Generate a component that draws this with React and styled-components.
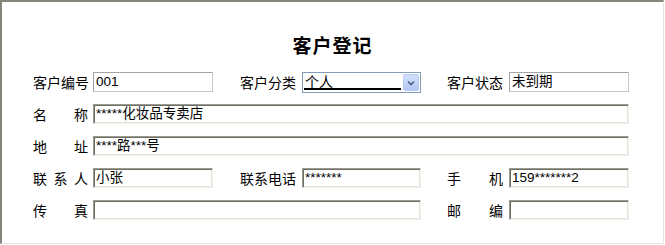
import React from 'react'
import styled, { createGlobalStyle } from 'styled-components'

const Global = createGlobalStyle`
  html, body { margin: 0; padding: 0; background: #fff; }
  body { font-family: "Noto Sans CJK SC", sans-serif; }
`

const Frame = styled.div`
  box-sizing: border-box;
  width: 664px;
  height: 244px;
  border-top: 2px solid #85857a;
  border-left: 2px solid #85857a;
  border-right: 1px solid #e4e4dc;
  border-bottom: 1px solid #e4e4dc;
  background: #fff;
`

const Title = styled.h1`
  margin: 0;
  padding-top: 31px;
  height: 24px;
  line-height: 24px;
  text-align: center;
  font-family: "Noto Sans CJK SC", sans-serif;
  font-size: 19px;
  font-weight: 700;
  letter-spacing: 1px;
  color: #000;
`

const Form = styled.div`
  display: grid;
  margin-top: 15px;
  padding-left: 31px;
  grid-template-columns: 60px 120px 27px 62px 119px 26px 62px 120px;
  grid-auto-rows: 20px;
  row-gap: 12px;
`

const LabelBox = styled.div`
  grid-column: ${p => p.$col};
  width: ${p => p.$w || 55}px;
  display: flex;
  justify-content: space-between;
  align-items: center;
  font-size: 14px;
  color: #000;
  line-height: 20px;
`

const Label = ({ text, col, w }) => (
  <LabelBox $col={col} $w={w}>
    {text.split('').map((c, i) => <span key={i}>{c}</span>)}
  </LabelBox>
)

const Input = styled.div`
  grid-column: ${p => p.$col};
  box-sizing: border-box;
  height: 20px;
  padding-left: 2px;
  font-family: "Liberation Sans", "Noto Sans CJK SC", sans-serif;
  font-size: 13.5px;
  line-height: 17px;
  color: #000;
  white-space: nowrap;
  overflow: hidden;
  background: #fff;
  ${p => p.$flat ? `
    border: 1px solid #a4a4a4;
    border-bottom-color: #c8c8c8;
    border-right-color: #c8c8c8;
  ` : `
    border-top: 1px solid #9a9a90;
    border-left: 1px solid #9a9a90;
    border-bottom: 1px solid #f2f1ea;
    border-right: 1px solid #f2f1ea;
    box-shadow: inset 1px 1px 0 #6e6e64, inset -1px -1px 0 #e3e2da;
  `}
`

const Select = styled.div`
  grid-column: ${p => p.$col};
  box-sizing: border-box;
  height: 21px;
  border: 1px solid #7f9db9;
  display: flex;
  align-items: stretch;
  padding: 1px;
  gap: 2px;
  background: #fff;
`

const SelectValue = styled.div`
  flex: 1;
  box-sizing: border-box;
  font-size: 14px;
  line-height: 15px;
  padding-left: 1px;
  border-bottom: 2px solid #000;
  margin-bottom: 1px;
`

const DropButton = styled.div`
  width: 16px;
  box-sizing: border-box;
  border: 1px solid #b9cbf3;
  border-radius: 2px;
  background: linear-gradient(#d2e0fd, #b4c8f6);
  display: flex;
  align-items: center;
  justify-content: center;
`

const Chevron = () => (
  <svg width="8" height="6" viewBox="0 0 8 6">
    <path d="M1 1.5 L4 4.5 L7 1.5" fill="none" stroke="#4d6185" strokeWidth="1.6" />
  </svg>
)

export default function App() {
  return (
    <>
      <Global />
      <Frame>
        <Title>客户登记</Title>
        <Form>
          <Label text="客户编号" col="1" />
          <Input $col="2" $flat>001</Input>
          <Label text="客户分类" col="4" />
          <Select $col="5">
            <SelectValue>个人</SelectValue>
            <DropButton><Chevron /></DropButton>
          </Select>
          <Label text="客户状态" col="7" w={56} />
          <Input $col="8" $flat>未到期</Input>

          <Label text="名称" col="1" />
          <Input $col="2 / 9">*****化妆品专卖店</Input>

          <Label text="地址" col="1" />
          <Input $col="2 / 9">****路***号</Input>

          <Label text="联系人" col="1" />
          <Input $col="2">小张</Input>
          <Label text="联系电话" col="4" />
          <Input $col="5">*******</Input>
          <Label text="手机" col="7" w={56} />
          <Input $col="8">159*******2</Input>

          <Label text="传真" col="1" />
          <Input $col="2 / 6"></Input>
          <Label text="邮编" col="7" w={56} />
          <Input $col="8"></Input>
        </Form>
      </Frame>
    </>
  )
}
